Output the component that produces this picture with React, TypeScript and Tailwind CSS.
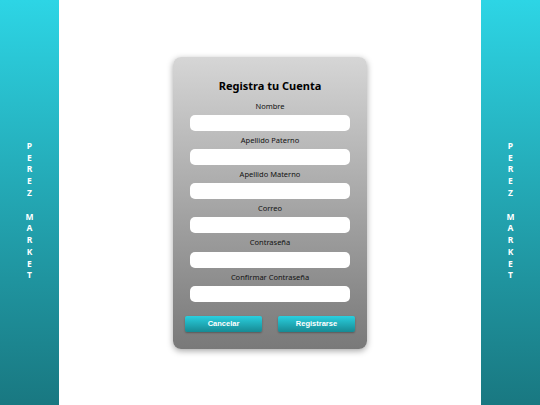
const campos = [
  "Nombre",
  "Apellido Paterno",
  "Apellido Materno",
  "Correo",
  "Contraseña",
  "Confirmar Contraseña",
];

const letras = ["P", "E", "R", "E", "Z", "", "M", "A", "R", "K", "E", "T"];

// barra lateral con la marca en vertical
const Lateral = () => (
  <div className="w-[59px] h-full flex flex-col items-center justify-center bg-gradient-to-b from-[#2dd5e5] to-[#197881]">
    <div className="flex flex-col items-center pt-[16px]">
      {letras.map((l, i) => (
        <span
          key={i}
          className="h-[11.8px] leading-[11.8px] text-[8.5px] font-bold text-white"
          style={{ fontFamily: '"Noto Sans", sans-serif' }}
        >
          {l}
        </span>
      ))}
    </div>
  </div>
);

export default function App() {
  return (
    <div className="w-[540px] h-[405px] flex bg-white" style={{ fontFamily: '"Noto Sans", Inter, sans-serif' }}>
      <Lateral />

      <div className="flex-1 flex items-center justify-center">
        <div className="w-[194px] h-[292px] rounded-[8px] bg-gradient-to-b from-[#d6d6d6] to-[#797979] shadow-[0_2px_6px_rgba(0,0,0,0.35)] flex flex-col items-center pt-[21px] px-[12px]">
          <h1 className="text-[11px] leading-[16px] font-bold text-black">Registra tu Cuenta</h1>

          <div className="flex flex-col gap-[4px] mt-[7px] w-full items-center">
            {campos.map((c) => (
              <div key={c} className="flex flex-col items-center">
                <label className="text-[7.5px] leading-[11.2px] text-[#111]">{c}</label>
                <input className="mt-[3px] w-[160px] h-[16px] rounded-[5px] bg-white outline-none" />
              </div>
            ))}
          </div>

          <div className="flex justify-between w-full mt-[14px]">
            <button
              className="w-[77px] h-[16px] rounded-[2px] bg-gradient-to-b from-[#2ad0df] to-[#178a94] text-white text-[7.5px] font-bold shadow-[0_1px_2px_rgba(0,0,0,0.3)]"
              style={{ fontFamily: '"Liberation Sans", Arial, sans-serif' }}
            >
              Cancelar
            </button>
            <button
              className="w-[77px] h-[16px] rounded-[2px] bg-gradient-to-b from-[#2ad0df] to-[#178a94] text-white text-[7.5px] font-bold shadow-[0_1px_2px_rgba(0,0,0,0.3)]"
              style={{ fontFamily: '"Liberation Sans", Arial, sans-serif' }}
            >
              Registrarse
            </button>
          </div>
        </div>
      </div>

      <Lateral />
    </div>
  );
}
